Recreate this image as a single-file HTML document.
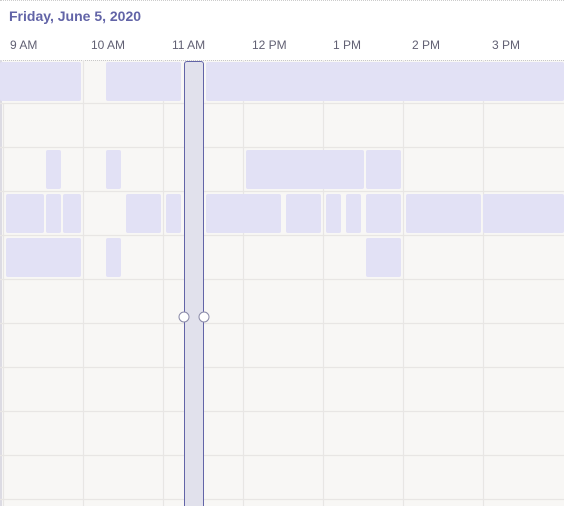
<!DOCTYPE html><html><head><style>
html,body{margin:0;width:564px;height:506px;overflow:hidden}
body{background:#fff;font-family:"Liberation Sans",sans-serif;position:relative}
.a{position:absolute}
.b{position:absolute;background:#e2e1f5;border-radius:2px}
.t{position:absolute;top:38px;font-size:12px;color:#616073}
</style></head><body>
<div class="a" style="left:0;top:0;width:564px;height:1px;border-top:1px dotted #ccc"></div>
<div class="a" style="left:9px;top:8px;font-size:14px;font-weight:bold;color:#6264a7">Friday, June 5, 2020</div>
<div class="t" style="left:10px">9 AM</div>
<div class="t" style="left:91px">10 AM</div>
<div class="t" style="left:172px">11 AM</div>
<div class="t" style="left:252px">12 PM</div>
<div class="t" style="left:333px">1 PM</div>
<div class="t" style="left:412px">2 PM</div>
<div class="t" style="left:492px">3 PM</div>
<div class="a" style="left:0;top:60px;width:564px;height:446px;background:#f8f7f5;border-top:1px dotted #c8c8c8;box-sizing:border-box"></div>
<div class="a" style="left:0;top:60px;width:2px;height:446px;background:#dcdbe3"></div>
<svg class="a" style="left:0;top:0" width="564" height="506">
<g stroke="#e8e6e4" stroke-width="1.2">
<line x1="3.5" y1="103" x2="3.5" y2="506"/>
<line x1="83.5" y1="60" x2="83.5" y2="506"/><line x1="163.5" y1="60" x2="163.5" y2="506"/>
<line x1="243.5" y1="60" x2="243.5" y2="506"/><line x1="323.5" y1="60" x2="323.5" y2="506"/>
<line x1="403.5" y1="60" x2="403.5" y2="506"/><line x1="483.5" y1="60" x2="483.5" y2="506"/>
<line x1="0" y1="103.5" x2="564" y2="103.5"/><line x1="0" y1="147.5" x2="564" y2="147.5"/>
<line x1="0" y1="191.5" x2="564" y2="191.5"/><line x1="0" y1="235.5" x2="564" y2="235.5"/>
<line x1="0" y1="279.5" x2="564" y2="279.5"/><line x1="0" y1="323.5" x2="564" y2="323.5"/>
<line x1="0" y1="367.5" x2="564" y2="367.5"/><line x1="0" y1="411.5" x2="564" y2="411.5"/>
<line x1="0" y1="455.5" x2="564" y2="455.5"/><line x1="0" y1="499.5" x2="564" y2="499.5"/>
</g></svg>
<div class="b" style="left:0;top:62px;width:81px;height:39px"></div>
<div class="b" style="left:106px;top:62px;width:75px;height:39px"></div>
<div class="b" style="left:206px;top:62px;width:358px;height:39px"></div>
<div class="b" style="left:46px;top:150px;width:15px;height:39px"></div>
<div class="b" style="left:106px;top:150px;width:15px;height:39px"></div>
<div class="b" style="left:246px;top:150px;width:118px;height:39px"></div>
<div class="b" style="left:366px;top:150px;width:35px;height:39px"></div>
<div class="b" style="left:6px;top:194px;width:38px;height:39px"></div>
<div class="b" style="left:46px;top:194px;width:15px;height:39px"></div>
<div class="b" style="left:63px;top:194px;width:18px;height:39px"></div>
<div class="b" style="left:126px;top:194px;width:35px;height:39px"></div>
<div class="b" style="left:166px;top:194px;width:15px;height:39px"></div>
<div class="b" style="left:206px;top:194px;width:75px;height:39px"></div>
<div class="b" style="left:286px;top:194px;width:35px;height:39px"></div>
<div class="b" style="left:326px;top:194px;width:15px;height:39px"></div>
<div class="b" style="left:346px;top:194px;width:15px;height:39px"></div>
<div class="b" style="left:366px;top:194px;width:35px;height:39px"></div>
<div class="b" style="left:406px;top:194px;width:75px;height:39px"></div>
<div class="b" style="left:483px;top:194px;width:81px;height:39px"></div>
<div class="b" style="left:6px;top:238px;width:75px;height:39px"></div>
<div class="b" style="left:106px;top:238px;width:15px;height:39px"></div>
<div class="b" style="left:366px;top:238px;width:35px;height:39px"></div>
<div class="a" style="left:184px;top:61px;width:18px;height:450px;background:#e1e1ec;border:1px solid #6264a7;border-radius:3px 3px 0 0"></div>
<svg class="a" style="left:0;top:0" width="564" height="506">
<circle cx="184" cy="317" r="5" fill="#fff" stroke="#8a8aa8"/>
<circle cx="204" cy="317" r="5" fill="#fff" stroke="#8a8aa8"/>
</svg>
</body></html>
